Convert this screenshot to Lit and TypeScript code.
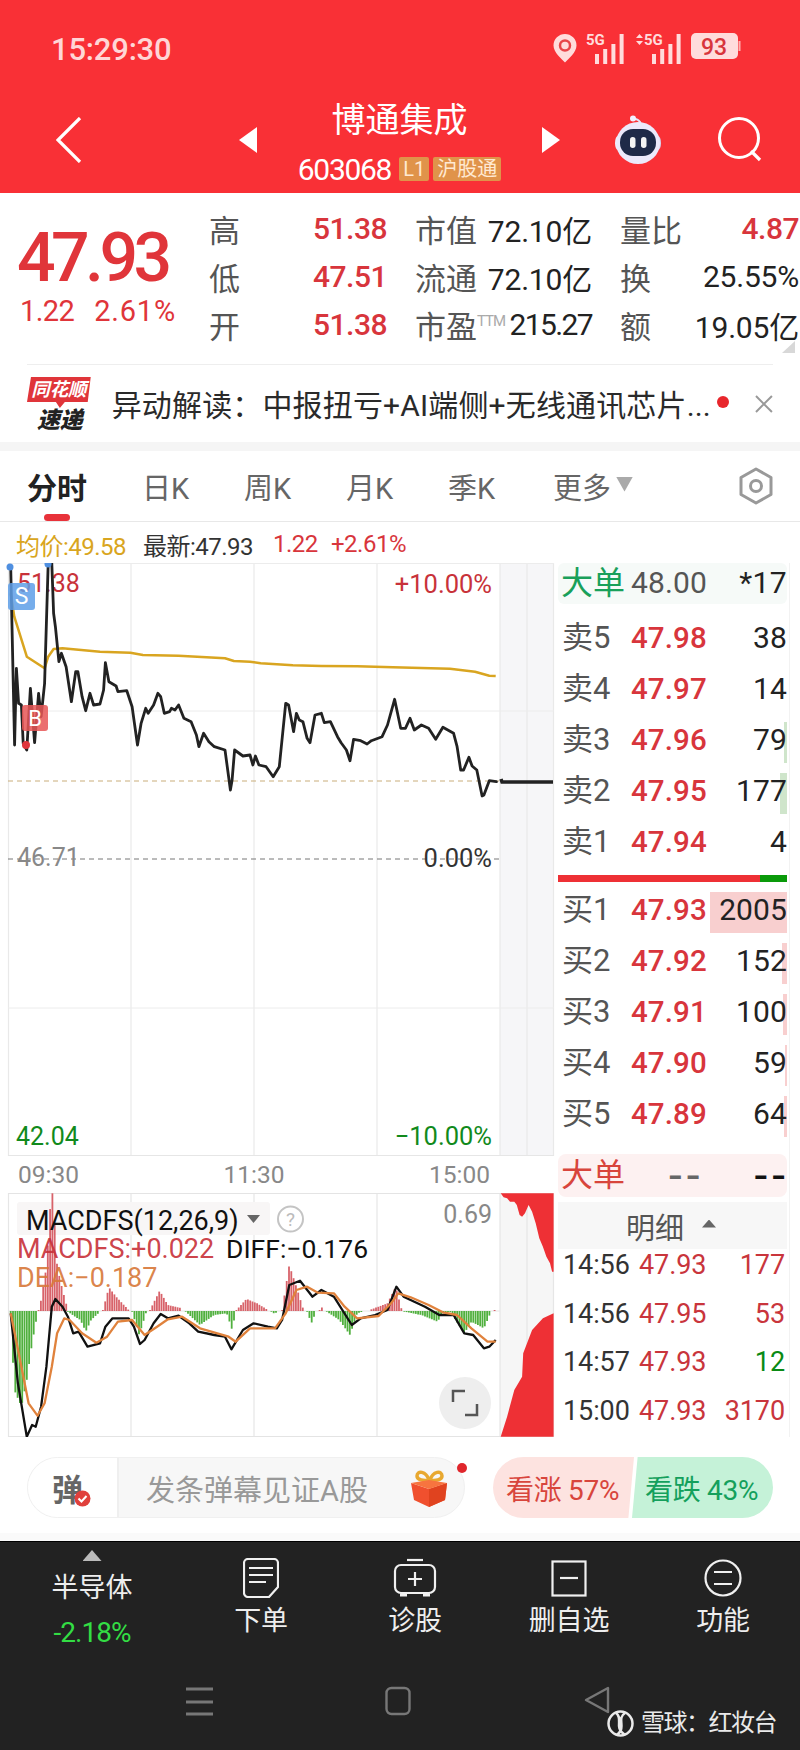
import { LitElement, html, css, svg } from "lit";
import { customElement } from "lit/decorators.js";

type Pt = [number, number];

// Sampled series in 2.8x / 3x plot units, mapped to page pixels below.
const PRICE: Pt[] = [[30,50],[41,585],[46,355],[52,460],[60,465],[65,580],[75,600],[85,415],[97,578],[108,430],[115,500],[125,400],[135,40],[145,40],[150,190],[155,230],[165,335],[172,310],[185,350],[200,455],[212,365],[218,365],[230,440],[240,482],[252,430],[262,465],[280,462],[290,420],[295,338],[305,395],[325,408],[330,425],[355,422],[370,470],[385,585],[395,520],[408,475],[415,490],[430,465],[442,430],[450,440],[460,490],[475,485],[480,475],[490,480],[500,465],[515,505],[535,515],[550,555],[557,590],[570,550],[585,575],[600,590],[630,600],[645,720],[650,690],[657,600],[680,618],[700,615],[708,645],[715,618],[725,645],[745,650],[765,680],[782,650],[800,460],[808,465],[822,545],[830,490],[838,510],[848,515],[860,565],[868,578],[882,495],[900,490],[908,518],[925,515],[945,560],[955,578],[970,600],[980,632],[990,568],[1010,572],[1028,582],[1040,572],[1070,560],[1085,525],[1105,448],[1122,535],[1135,535],[1148,505],[1160,540],[1180,525],[1200,535],[1220,568],[1240,532],[1270,550],[1280,590],[1290,660],[1298,660],[1313,622],[1322,648],[1335,660],[1350,738],[1355,735],[1370,692],[1390,695]];
const AVG: Pt[] = [[30,130],[40,200],[75,320],[125,355],[135,320],[150,297],[175,295],[280,305],[365,308],[400,315],[500,317],[630,325],[655,333],[700,335],[730,340],[820,346],[900,348],[1000,349],[1100,352],[1260,356],[1330,365],[1370,377],[1388,378]];
const DIFF: Pt[] = [[30,490],[50,700],[75,860],[90,825],[100,830],[115,770],[130,650],[145,470],[155,447],[175,470],[190,500],[205,550],[220,545],[245,590],[280,580],[295,530],[315,505],[360,505],[375,530],[392,582],[405,570],[430,520],[450,492],[470,505],[500,497],[530,520],[555,545],[600,555],[630,560],[648,598],[680,540],[710,520],[750,530],[775,535],[790,510],[810,405],[840,392],[875,440],[900,420],[935,440],[985,525],[1010,505],[1050,495],[1085,480],[1110,410],[1130,440],[1160,455],[1190,470],[1230,495],[1270,495],[1300,550],[1325,555],[1355,595],[1370,590],[1388,570]];
const DEA: Pt[] = [[30,490],[60,650],[80,760],[105,797],[125,760],[145,650],[160,550],[180,505],[195,510],[230,550],[270,578],[300,560],[330,515],[370,510],[405,555],[440,530],[470,508],[510,500],[560,535],[640,560],[660,575],[700,535],[770,535],[800,490],[830,420],[860,410],[890,428],[935,430],[965,470],[1000,505],[1060,498],[1095,460],[1115,430],[1150,442],[1200,465],[1240,487],[1280,495],[1320,535],[1365,575],[1388,575]];

// Histogram envelopes: each run is one coloured hump around the zero line.
const RED_RUNS: Pt[][] = [
  [[108,480],[115,450],[130,350],[143,130],[148,130],[160,350],[175,420],[190,480]],
  [[288,480],[305,412],[325,440],[360,480]],
  [[420,480],[447,422],[470,465],[510,475]],
  [[662,480],[690,447],[720,460],[750,480]],
  [[790,480],[810,345],[830,410],[850,480]],
  [[895,480],[900,470],[905,480]],
  [[1040,478],[1085,460],[1108,410],[1125,480]],
  [[1385,480],[1390,470]],
];
const GREEN_RUNS: Pt[][] = [
  [[30,490],[40,720],[60,770],[75,690],[90,580],[105,490]],
  [[190,485],[210,500],[225,510],[240,545],[255,510],[280,485]],
  [[370,485],[390,555],[410,485]],
  [[520,485],[560,525],[600,495],[635,490],[650,540],[660,485]],
  [[760,485],[770,492],[775,485]],
  [[860,485],[872,520],[885,485]],
  [[915,485],[950,510],[980,555],[1000,490],[1015,485]],
  [[1132,485],[1180,495],[1225,515],[1240,490],[1260,485],[1300,550],[1320,515],[1355,535],[1375,485]],
];
const FLOW_TOP: Pt[] = [[1402,130],[1410,142],[1420,145],[1428,155],[1440,155],[1447,165],[1455,195],[1462,200],[1470,190],[1480,165],[1490,185],[1500,220],[1510,265],[1520,290],[1530,320],[1540,340],[1546,365],[1550,365],[1550,130]];
const FLOW_BOTTOM: Pt[] = [[1402,860],[1420,800],[1440,720],[1462,680],[1465,610],[1490,540],[1520,505],[1550,490],[1550,860]];

const upper = (p: Pt): Pt => [p[0] / 2.8, 550 + p[1] / 3];
const lower = (p: Pt): Pt => [p[0] / 2.8, 1150 + p[1] / 3];
const toPath = (pts: Pt[], map: (p: Pt) => Pt) =>
  pts.map((p, i) => { const [x, y] = map(p); return `${i ? "L" : "M"}${x.toFixed(1)} ${y.toFixed(1)}`; }).join("");

const ZERO = 1311;
function histogram(runs: Pt[][], color: string) {
  const lines = [];
  for (const run of runs) {
    const [a] = lower(run[0]);
    const [b] = lower(run[run.length - 1]);
    for (let x = a; x <= b; x += 2.3) {
      let seg = 0;
      while (seg < run.length - 2 && lower(run[seg + 1])[0] < x) seg++;
      const [x0, y0] = lower(run[seg]);
      const [x1, y1] = lower(run[seg + 1]);
      const y = y0 + ((y1 - y0) * (x - x0)) / Math.max(x1 - x0, 0.01);
      lines.push(svg`<line x1=${x.toFixed(1)} x2=${x.toFixed(1)} y1=${ZERO} y2=${y.toFixed(1)} stroke=${color} stroke-width="1.800" opacity=".9"/>`);
    }
  }
  return lines;
}

const VERTICALS = [8.5, 131, 254, 377, 500, 527, 553.5];

const ASKS = [["卖5","47.98","38",0,""],["卖4","47.97","14",0,""],["卖3","47.96","79",3,"g"],["卖2","47.95","177",7,"g"],["卖1","47.94","4",0,""]] as const;
const BIDS = [["买1","47.93","2005",77,"r"],["买2","47.92","152",5,"r"],["买3","47.91","100",4,"r"],["买4","47.90","59",2,"r"],["买5","47.89","64",3,"r"]] as const;
const TICKS = [["14:56","47.93","177","up"],["14:56","47.95","53","up"],["14:57","47.93","12","down"],["15:00","47.93","3170","up"]] as const;

@customElement("app-root")
export class AppRoot extends LitElement {
  static styles = css`
    :host { display: block; width: 800px; height: 1750px; overflow: hidden; position: relative; background: #fff; font-family: Roboto, "Noto Sans CJK SC", sans-serif; color: #222; }
    svg { display: block; }
    text { font-family: Roboto, "Noto Sans CJK SC", sans-serif; }

    .top { height: 193px; background: #f93036; color: #fff; }
    .status { height: 98px; display: flex; align-items: center; padding-left: 51px; }
    .clock { font-size: 31px; font-weight: 500; color: #ffd6d6; width: 502px; letter-spacing: -.2px; }
    .nav { height: 85px; display: flex; align-items: center; margin-top: -1px; }
    .back { margin-left: 56px; }
    .prev { margin-left: 157px; }
    .center { width: 285px; display: flex; flex-direction: column; align-items: center; margin-top: 2px; }
    .name { font-size: 34px; line-height: 44px; height: 44px; }
    .code { display: flex; align-items: center; height: 28px; margin-top: 13px; font-size: 30px; letter-spacing: -1.3px; }
    .tag { background: #e0934a; color: #ffe9d2; height: 24px; line-height: 24px; font-size: 20px; border-radius: 2px; margin-left: 4px; padding: 0 4px; letter-spacing: 0; }
    .tag.first { margin-left: 8px; }
    .robot { margin-left: 55px; }
    .search { margin-left: 57px; }

    .quote { display: flex; height: 171px; box-sizing: border-box; padding-top: 11.5px; }
    .last { width: 209px; padding-left: 17px; box-sizing: border-box; color: #e0353a; }
    .big { font-size: 68px; font-weight: 500; line-height: 66px; margin-top: 20.5px; letter-spacing: -4.6px; }
    .delta { display: flex; gap: 20px; font-size: 29px; line-height: 36px; margin-top: 2px; margin-left: 3px; letter-spacing: -.6px; }
    .delta .wide { letter-spacing: .8px; }
    .stats { display: grid; grid-template-columns: 178px 177px 179px; column-gap: 28px; grid-auto-rows: 48px; }
    .stat { display: flex; justify-content: space-between; align-items: center; font-size: 31px; color: #555; white-space: nowrap; }
    .stat b { font-weight: 400; font-size: 30px; color: #222; letter-spacing: -.2px; }
    .stat b.up { color: #d8353c; font-weight: 500; letter-spacing: -.5px; }
    .stat b.tight { letter-spacing: -1.6px; }
    .stat sup { font-size: 15px; color: #aaa; line-height: 1; vertical-align: 12px; letter-spacing: -1px; }
    .corner { position: absolute; left: 782px; top: 341px; width: 13px; height: 12px; background: #d8d8d8; clip-path: polygon(100% 0, 100% 100%, 0 100%); }

    .alert { margin: 0 27px; border-top: 1px solid #eee; height: 78px; display: flex; align-items: center; box-sizing: border-box; }
    .alert-text { margin-left: 19px; width: 604px; font-size: 30px; letter-spacing: .15px; color: #2a2a2a; white-space: nowrap; margin-top: -2px; }
    .alert-dot { width: 12px; height: 12px; border-radius: 50%; background: #e8262c; margin-left: 4px; margin-top: -3px; }
    .alert-close { margin-left: 26px; }
    .band { height: 9px; background: #f5f5f5; }

    .tabs { height: 71px; border-bottom: 1px solid #e8e8e8; box-sizing: border-box; padding-left: 27px; display: grid; grid-template-columns: 115px 102px 102px 102px 105px 59px 21px 141px; align-items: center; font-size: 29px; color: #666; position: relative; }
    .tabs .on { color: #222; font-weight: 700; font-size: 30px; }
    .tabs .on::after { content: ""; position: absolute; left: 44px; top: 63px; width: 26px; height: 7px; border-radius: 4px; background: #e8323a; }
    .tri { width: 17px; height: 15px; background: #aaa; clip-path: polygon(0 0, 100% 0, 50% 100%); margin-left: 4px; margin-top: -4px; }

    .ticker { height: 41px; display: flex; align-items: center; padding: 3px 0 0 16px; box-sizing: border-box; font-size: 24px; letter-spacing: -.5px; }
    .ticker span { white-space: nowrap; }
    .avg { color: #d9a520; width: 127px; }
    .now { color: #333; width: 130px; }
    .chg { color: #d8353c; width: 58px; }
    .pct { color: #d8353c; }

    .main { display: flex; height: 874px; }
    .charts { width: 558px; flex: none; }
    .axis { height: 37px; display: flex; justify-content: space-between; align-items: center; padding: 0 68px 0 18px; font-size: 24.5px; color: #888; }

    .panel { width: 232px; box-sizing: border-box; padding-right: 2px; border-right: 1px solid #f2f2f2; }
    .row { display: grid; grid-template-columns: 69px 1fr auto; align-items: center; padding: 0 0 6px 4px; box-sizing: border-box; font-size: 30px; line-height: 32px; position: relative; letter-spacing: .1px; }
    .row > * { position: relative; }
    .row > .fill { position: absolute; }
    .big-order { height: 41px; padding-bottom: 2px; background: #f6faf8; border-radius: 6px; }
    .big-order .tag-g { color: #19a05a; font-size: 32px; margin-left: -1px; }
    .big-order .mid { color: #555; }
    .big-order .star { letter-spacing: .4px; }
    .asks { margin-top: 11px; }
    .depth { height: 51px; }
    .depth .lab { color: #555; font-size: 31px; }
    .depth .price { color: #d8353c; font-weight: 500; font-size: 29.5px; }
    .depth .vol { color: #222; }
    .fill { right: 0; top: 5px; bottom: 5px; }
    .fill.g { background: #cfe5cb; }
    .fill.r { background: #f8cfcf; }
    .split { height: 7px; margin-top: 5px; background: linear-gradient(90deg, #ee3035 88.2%, #0a9a0a 88.2%); }
    .bids { margin-top: 5px; }
    .flow-row { height: 43px; margin-top: 12px; background: #fdf1f1; border-radius: 8px; grid-template-columns: 107px 1fr auto; padding: 0 2px 2px 4px; }
    .flow-row .tag-r { color: #d8453c; font-size: 32px; margin-left: -1px; }
    .dash { font-size: 46px; line-height: 32px; font-weight: 400; letter-spacing: 5px; margin-right: -5px; }
    .flow-row .mid { color: #666; }
    .flow-row .end { color: #111; }
    .ticks-head { height: 47px; margin-top: 5px; background: #f7f7f7; display: flex; align-items: center; padding-left: 68px; font-size: 29px; color: #555; }
    .ticks-head i { width: 14px; height: 8px; background: #666; clip-path: polygon(50% 0, 100% 100%, 0 100%); margin-left: 18px; margin-top: -4px; }
    .ticks { display: grid; grid-auto-rows: 32px; row-gap: 16.7px; }
    .tick { display: grid; grid-template-columns: 76px 1fr auto; align-items: center; padding: 0 2px 0 5px; font-size: 27px; letter-spacing: -.1px; color: #333; }
    .tick .price { color: #c9353c; }
    .tick .up { color: #c9353c; }
    .tick .down { color: #0a8a14; }

    .talk { height: 96px; display: flex; padding: 20px 0 0 27px; box-sizing: border-box; }
    .pill { width: 438px; height: 61px; border-radius: 31px; border: 1px solid #f0f0f0; box-sizing: border-box; display: flex; align-items: center; background: #f7f7f7; position: relative; }
    .pill-left { width: 91px; height: 59px; background: #fff; border-radius: 30px 0 0 30px; border-right: 2px solid #efefef; box-sizing: border-box; display: flex; align-items: center; justify-content: flex-end; padding-right: 34px; font-size: 31px; font-weight: 700; color: #666; position: relative; flex: none; }
    .check { position: absolute; left: 46px; top: 32px; }
    .hint { margin-left: 27px; font-size: 29px; color: #999; width: 265px; white-space: nowrap; }
    .notify { position: absolute; left: 429px; top: 5px; width: 10px; height: 10px; border-radius: 50%; background: #e0262c; }
    .vote { display: flex; margin-left: 28px; width: 280px; height: 61px; }
    .bull, .bear { width: 141px; height: 61px; display: flex; align-items: center; font-size: 28px; white-space: nowrap; box-sizing: border-box; letter-spacing: -.3px; flex: none; }
    .bull { background: #fde3e0; color: #d8453c; border-radius: 31px 0 0 31px; clip-path: polygon(0 0, 100% 0, 96% 100%, 0 100%); padding-left: 13px; }
    .bear { background: #c5f2d8; color: #14a05c; border-radius: 0 31px 31px 0; clip-path: polygon(4% 0, 100% 0, 100% 100%, 0 100%); margin-left: -2px; padding-left: 13px; }

    .gap { height: 8px; background: #fafafa; border-bottom: 1px solid #000; }
    .dock { height: 208px; background: #222; color: #eee; position: relative; }
    .tools { display: grid; grid-template-columns: 184px repeat(4, 154px); height: 127px; }
    .tool { display: flex; flex-direction: column; align-items: center; padding-top: 16px; font-size: 27px; }
    .tool .glyph { height: 40px; display: flex; align-items: flex-end; }
    .tool .cap { line-height: 36px; margin-top: 5px; letter-spacing: -.2px; }
    .sector { display: flex; flex-direction: column; align-items: center; padding-top: 8px; width: 184px; font-size: 27px; }
    .sector i { width: 19px; height: 11px; background: #bbb; clip-path: polygon(50% 0, 100% 100%, 0 100%); }
    .sector .s-name { line-height: 34px; margin-top: 10px; }
    .sector .s-pct { line-height: 34px; margin-top: 11px; color: #33dd44; font-size: 28px; letter-spacing: -1px; }
    .sys { display: flex; padding: 10px 0 0 186px; }
    .sys .home { margin-left: 172px; }
    .sys .ret { margin-left: 173px; }
    .mark { position: absolute; left: 607px; top: 168px; display: flex; align-items: center; gap: 7px; font-size: 24px; line-height: 27px; color: #eaeaea; white-space: nowrap; letter-spacing: -1.5px; }
  `;

  private status() {
    const bars = (x: number) => [10, 15, 20, 30].map((h, i) => svg`<rect x=${x + i * 8.2} y=${32 - h} width="4" height=${h} fill="#ffdcdc"/>`);
    return html`<svg width="190" height="36" viewBox="0 0 190 36" style="margin-top:2px">
      <path d="M12 1a11.500 11.500 0 0 0-11.500 11.500c0 7 8 13 11.500 17 3.500-4 11.500-10 11.500-17A11.500 11.500 0 0 0 12 1z" fill="#ffdcdc" transform="translate(0 1)"/>
      <circle cx="12" cy="13.500" r="5" fill="none" stroke="#e8464a" stroke-width="2.500"/>
      <text x="33" y="13" font-size="15" font-weight="700" fill="#ffdcdc">5G</text>
      ${bars(42)}
      <path d="M83 6l3.500-4 3.500 4zM83 9l3.500 4 3.500-4z" fill="#ffdcdc"/>
      <text x="91" y="13" font-size="15" font-weight="700" fill="#ffdcdc">5G</text>
      ${bars(99)}
      <rect x="138" y="1" width="47" height="26" rx="5" fill="#ffdcdc"/>
      <rect x="185.500" y="9" width="2" height="10" fill="#ffb0b0"/>
      <text x="161" y="23" font-size="23" font-weight="500" fill="#d8353c" text-anchor="middle">93</text>
    </svg>`;
  }

  private robot() {
    return html`<svg class="robot" width="46" height="50" viewBox="0 0 46 50">
      <path d="M19 4c3 0 6 2 7 5" fill="none" stroke="#e6e6f8" stroke-width="2"/>
      <circle cx="18" cy="3.500" r="3" fill="#f2f0ff"/>
      <ellipse cx="3" cy="28" rx="3" ry="7" fill="#f0eefc"/>
      <ellipse cx="43" cy="28" rx="3" ry="7" fill="#d8d4f0"/>
      <ellipse cx="23" cy="28" rx="22" ry="21" fill="#ece9fb"/>
      <rect x="5" y="14" width="36" height="27" rx="13" fill="#1f2a48"/>
      <rect x="15" y="22" width="5.500" height="11" rx="2.700" fill="#f4f4f4"/>
      <rect x="26" y="22" width="5.500" height="11" rx="2.700" fill="#f4f4f4"/>
    </svg>`;
  }

  private priceChart() {
    const hz = [563, 711, 1008];
    return html`<svg width="558" height="593" viewBox="0 563 558 593">
      <rect x="500" y="563" width="53.500" height="593" fill="#f6f6f8"/>
      ${VERTICALS.map((x) => svg`<line x1=${x} x2=${x} y1="563" y2="1156" stroke="#e9e9e9" stroke-width="1.200"/>`)}
      ${hz.map((y) => svg`<line x1="8" x2="554" y1=${y} y2=${y} stroke="#ececec"/>`)}
      <line x1="8" x2="554" y1="1155.500" y2="1155.500" stroke="#e6e6e6"/>
      <line x1="8" x2="554" y1="563.500" y2="563.500" stroke="#ececec"/>
      <line x1="8" x2="500" y1="781" y2="781" stroke="#c9ad7a" stroke-dasharray="5 4"/>
      <line x1="8" x2="500" y1="859" y2="859" stroke="#777" stroke-dasharray="5 4"/>

      <text x="17" y="592" font-size="25" fill="#c8323a">51.38</text>
      <text x="492" y="593" font-size="25.500" fill="#c8323a" text-anchor="end">+10.00%</text>
      <text x="17" y="866" font-size="25" fill="#888">46.71</text>
      <text x="492" y="867" font-size="25.500" fill="#333" text-anchor="end">0.00%</text>
      <text x="16" y="1145" font-size="25" fill="#118a1c">42.04</text>
      <text x="492" y="1145" font-size="25.500" fill="#118a1c" text-anchor="end">−10.00%</text>

      <path d=${toPath(AVG, upper)} fill="none" stroke="#d9a520" stroke-width="2.500" stroke-linejoin="round"/>
      <path d=${toPath(PRICE, upper)} fill="none" stroke="#222" stroke-width="2.800" stroke-linejoin="round" stroke-linecap="round"/>
      <path d="M501 779l1 3H553" fill="none" stroke="#222" stroke-width="3.500"/>

      <rect x="8" y="583" width="27" height="27" rx="3" fill="#5e9fe8" opacity=".85"/>
      <text x="21.500" y="604" font-size="23" fill="#fff" text-anchor="middle">S</text>
      <rect x="22" y="705" width="26" height="26" rx="3" fill="#e85656" opacity=".85"/>
      <text x="35" y="726" font-size="22" fill="#fff" text-anchor="middle">B</text>
      <circle cx="10" cy="567" r="3.500" fill="#4f8fe0"/>
      <circle cx="48" cy="564" r="3.500" fill="#4f8fe0"/>
      <circle cx="26" cy="745" r="4" fill="#e0363c"/>
    </svg>`;
  }

  private macdChart() {
    return html`<svg width="558" height="244" viewBox="0 1193 558 244">
      <rect x="500" y="1193" width="53.500" height="244" fill="#f6f6f6"/>
      ${VERTICALS.map((x) => svg`<line x1=${x} x2=${x} y1="1193" y2="1437" stroke="#e6e6e6" stroke-width="1.200"/>`)}
      <line x1="8" x2="554" y1="1193.500" y2="1193.500" stroke="#e4e4e4"/>
      <line x1="8" x2="554" y1="1436.500" y2="1436.500" stroke="#e4e4e4"/>
      <line x1="8" x2="500" y1=${ZERO} y2=${ZERO} stroke="#e6e6e6"/>
      <rect x="17" y="1202" width="253" height="33" rx="3" fill="#f8f6f6"/>

      ${histogram(RED_RUNS, "#d4525a")}
      ${histogram(GREEN_RUNS, "#3ea82a")}

      <text x="26" y="1230" font-size="27" fill="#111">MACDFS(12,26,9)</text>
      <path d="M247 1215h13l-6.500 8z" fill="#666"/>
      <circle cx="290.500" cy="1219" r="12.500" fill="#fff" stroke="#c4c4c4" stroke-width="2"/>
      <text x="290.500" y="1226" font-size="19" fill="#bbb" text-anchor="middle">?</text>
      <text x="492" y="1223" font-size="25" fill="#888" text-anchor="end">0.69</text>
      <text x="17" y="1258" font-size="27" fill="#c8323a" fill-opacity=".92">MACDFS:+0.022</text>
      <text x="226" y="1258" font-size="26.500" fill="#111">DIFF:−0.176</text>
      <text x="17" y="1287" font-size="27" fill="#d8793a" fill-opacity=".92">DEA:−0.187</text>

      <path d=${toPath(DIFF, lower)} fill="none" stroke="#111" stroke-width="2.300" stroke-linejoin="round"/>
      <path d=${toPath(DEA, lower)} fill="none" stroke="#e0823c" stroke-width="2.300" stroke-linejoin="round"/>
      <path d=${toPath(FLOW_TOP, lower) + "Z"} fill="#ee3035"/>
      <path d=${toPath(FLOW_BOTTOM, lower) + "Z"} fill="#ee3035"/>

      <circle cx="465" cy="1403" r="26" fill="#eeeeee"/>
      <path d="M453 1402v-11h12M477 1404v11h-12" fill="none" stroke="#555" stroke-width="2.500"/>
    </svg>`;
  }

  private depthRow(r: readonly [string, string, string, number, string]) {
    return html`<div class="row depth">
      ${r[3] ? html`<div class="fill ${r[4]}" style="width:${r[3]}px"></div>` : ""}
      <span class="lab">${r[0]}</span><span class="price">${r[1]}</span><span class="vol">${r[2]}</span>
    </div>`;
  }

  render() {
    const stroke = "#f0f0f0";
    return html`
      <header class="top">
        <div class="status"><span class="clock">15:29:30</span>${this.status()}</div>
        <div class="nav">
          <svg class="back" width="26" height="46" viewBox="0 0 26 46"><path d="M24 1L2 23l22 22" fill="none" stroke="#fff" stroke-width="3.200"/></svg>
          <svg class="prev" width="18" height="26" viewBox="0 0 18 26"><path d="M18 0v26L0 13z" fill="#fff"/></svg>
          <div class="center">
            <div class="name">博通集成</div>
            <div class="code">603068<span class="tag first">L1</span><span class="tag">沪股通</span></div>
          </div>
          <svg width="18" height="26" viewBox="0 0 18 26"><path d="M0 0v26l18-13z" fill="#fff"/></svg>
          ${this.robot()}
          <svg class="search" width="46" height="46" viewBox="0 0 46 46"><circle cx="21" cy="21" r="19.500" fill="none" stroke="#fff" stroke-width="3"/><path d="M33 34l9 9" stroke="#fff" stroke-width="3.200"/></svg>
        </div>
      </header>

      <section class="quote">
        <div class="last">
          <div class="big">47.93</div>
          <div class="delta"><span>1.22</span><span class="wide">2.61%</span></div>
        </div>
        <div class="stats">
          <div class="stat">高<b class="up">51.38</b></div>
          <div class="stat">市值<b>72.10亿</b></div>
          <div class="stat">量比<b class="up">4.87</b></div>
          <div class="stat">低<b class="up">47.51</b></div>
          <div class="stat">流通<b>72.10亿</b></div>
          <div class="stat">换<b>25.55%</b></div>
          <div class="stat">开<b class="up">51.38</b></div>
          <div class="stat"><span>市盈<sup>TTM</sup></span><b class="tight">215.27</b></div>
          <div class="stat">额<b>19.05亿</b></div>
        </div>
        <div class="corner"></div>
      </section>

      <div class="alert">
        <svg width="66" height="58" viewBox="0 0 66 58">
          <path d="M4 2h60l-3 25H38l-5 6-4-6H0z" fill="#e0353a"/>
          <text x="32" y="21" font-size="18.500" font-weight="700" font-style="italic" fill="#fff" text-anchor="middle">同花顺</text>
          <text x="33" y="53" font-size="23" font-weight="900" font-style="italic" fill="#222" text-anchor="middle">速递</text>
        </svg>
        <div class="alert-text">异动解读：中报扭亏+AI端侧+无线通讯芯片...</div>
        <div class="alert-dot"></div>
        <svg class="alert-close" width="18" height="18" viewBox="0 0 18 18"><path d="M1 1l16 16M17 1L1 17" stroke="#999" stroke-width="2"/></svg>
      </div>
      <div class="band"></div>

      <nav class="tabs">
        <span class="on">分时</span><span>日K</span><span>周K</span><span>月K</span><span>季K</span><span>更多</span>
        <div class="tri"></div>
        <svg width="36" height="38" viewBox="0 0 36 38" style="justify-self:end"><path d="M18 2l15 8.500v17L18 36 3 27.500v-17z" fill="none" stroke="#999" stroke-width="3" stroke-linejoin="round"/><circle cx="18" cy="19" r="5.500" fill="none" stroke="#999" stroke-width="3"/></svg>
      </nav>

      <div class="ticker"><span class="avg">均价:49.58</span><span class="now">最新:47.93</span><span class="chg">1.22</span><span class="pct">+2.61%</span></div>

      <div class="main">
        <div class="charts">
          ${this.priceChart()}
          <div class="axis"><span>09:30</span><span>11:30</span><span>15:00</span></div>
          ${this.macdChart()}
        </div>
        <aside class="panel">
          <div class="row big-order"><span class="tag-g">大单</span><span class="mid">48.00</span><span class="star">*17</span></div>
          <div class="asks">${ASKS.map((r) => this.depthRow(r))}</div>
          <div class="split"></div>
          <div class="bids">${BIDS.map((r) => this.depthRow(r))}</div>
          <div class="row flow-row"><span class="tag-r">大单</span><span class="mid dash">--</span><span class="end dash">--</span></div>
          <div class="ticks-head">明细<i></i></div>
          <div class="ticks">
            ${TICKS.map((t) => html`<div class="tick"><span>${t[0]}</span><span class="price">${t[1]}</span><span class=${t[3]}>${t[2]}</span></div>`)}
          </div>
        </aside>
      </div>

      <section class="talk">
        <div class="pill">
          <div class="pill-left">弹
            <svg class="check" width="17" height="17" viewBox="0 0 17 17"><circle cx="8.500" cy="8.500" r="8" fill="#e0403c"/><path d="M4.500 8.500l3 3 5-5.500" fill="none" stroke="#fff" stroke-width="2"/></svg>
          </div>
          <span class="hint">发条弹幕见证A股</span>
          <svg width="37" height="38" viewBox="0 0 37 38">
            <path d="M18 11c-3-9-12-10-12-4 0 4 7 5 12 4zM19 11c3-9 12-10 12-4 0 4-7 5-12 4z" fill="none" stroke="#e8a830" stroke-width="3.500"/>
            <path d="M0 14l18 6 18-6-2 17-16 7-15-7z" fill="#f0502e"/>
            <path d="M18 20v18l16-7 2-17z" fill="#e0431f"/>
            <path d="M0 14l18-3 18 3-18 6z" fill="#f7743f"/>
          </svg>
          <span class="notify"></span>
        </div>
        <div class="vote">
          <div class="bull">看涨 57%</div>
          <div class="bear">看跌 43%</div>
        </div>
      </section>

      <div class="gap"></div>

      <footer class="dock">
        <div class="tools">
          <div class="sector"><i></i><span class="s-name">半导体</span><span class="s-pct">-2.18%</span></div>
          <div class="tool">
            <div class="glyph"><svg width="36" height="40" viewBox="0 0 36 40"><path d="M5 1h26a4 4 0 0 1 4 4v24l-9 10H5a4 4 0 0 1-4-4V5a4 4 0 0 1 4-4z" fill="none" stroke=${stroke} stroke-width="2.200"/><path d="M6 10h24M6 17h24M6 24h17" stroke=${stroke} stroke-width="2.200"/></svg></div>
            <span class="cap">下单</span>
          </div>
          <div class="tool">
            <div class="glyph"><svg width="44" height="40" viewBox="0 0 44 40"><path d="M14 2h16" stroke=${stroke} stroke-width="2.200"/><rect x="2" y="7" width="40" height="28" rx="6" fill="none" stroke=${stroke} stroke-width="2.200"/><path d="M22 14v14M15 21h14" stroke=${stroke} stroke-width="2.200"/><path d="M7 37h7M30 37h7" stroke=${stroke} stroke-width="3"/></svg></div>
            <span class="cap">诊股</span>
          </div>
          <div class="tool">
            <div class="glyph"><svg width="36" height="38" viewBox="0 0 36 38"><rect x="1.500" y="1.500" width="33" height="34" fill="none" stroke=${stroke} stroke-width="2.200"/><path d="M9 18h18" stroke=${stroke} stroke-width="2.200"/></svg></div>
            <span class="cap">删自选</span>
          </div>
          <div class="tool">
            <div class="glyph"><svg width="38" height="40" viewBox="0 0 38 40"><circle cx="19" cy="20" r="17.500" fill="none" stroke=${stroke} stroke-width="2.200"/><path d="M10 14h18M10 26h18" stroke=${stroke} stroke-width="2.200"/></svg></div>
            <span class="cap">功能</span>
          </div>
        </div>
        <div class="sys">
          <svg width="27" height="42" viewBox="0 0 27 42"><path d="M0 10h27M0 23h27M0 35h27" stroke="#777" stroke-width="3"/></svg>
          <svg class="home" width="26" height="42" viewBox="0 0 26 42"><rect x="1.500" y="9" width="23" height="26" rx="5" fill="none" stroke="#777" stroke-width="2.400"/></svg>
          <svg class="ret" width="26" height="42" viewBox="0 0 26 42"><path d="M24 9v24L2 21z" fill="none" stroke="#777" stroke-width="2.400" stroke-linejoin="round"/></svg>
        </div>
        <div class="mark">
          <svg width="27" height="27" viewBox="0 0 27 27"><circle cx="13.500" cy="13.500" r="12" fill="none" stroke="#eaeaea" stroke-width="2.500"/><path d="M18 3C9 9 20 17 10 25M9 3c8 6-3 14 9 22" fill="none" stroke="#eaeaea" stroke-width="2.500"/></svg>
          <span>雪球：红妆台</span>
        </div>
      </footer>
    `;
  }
}
